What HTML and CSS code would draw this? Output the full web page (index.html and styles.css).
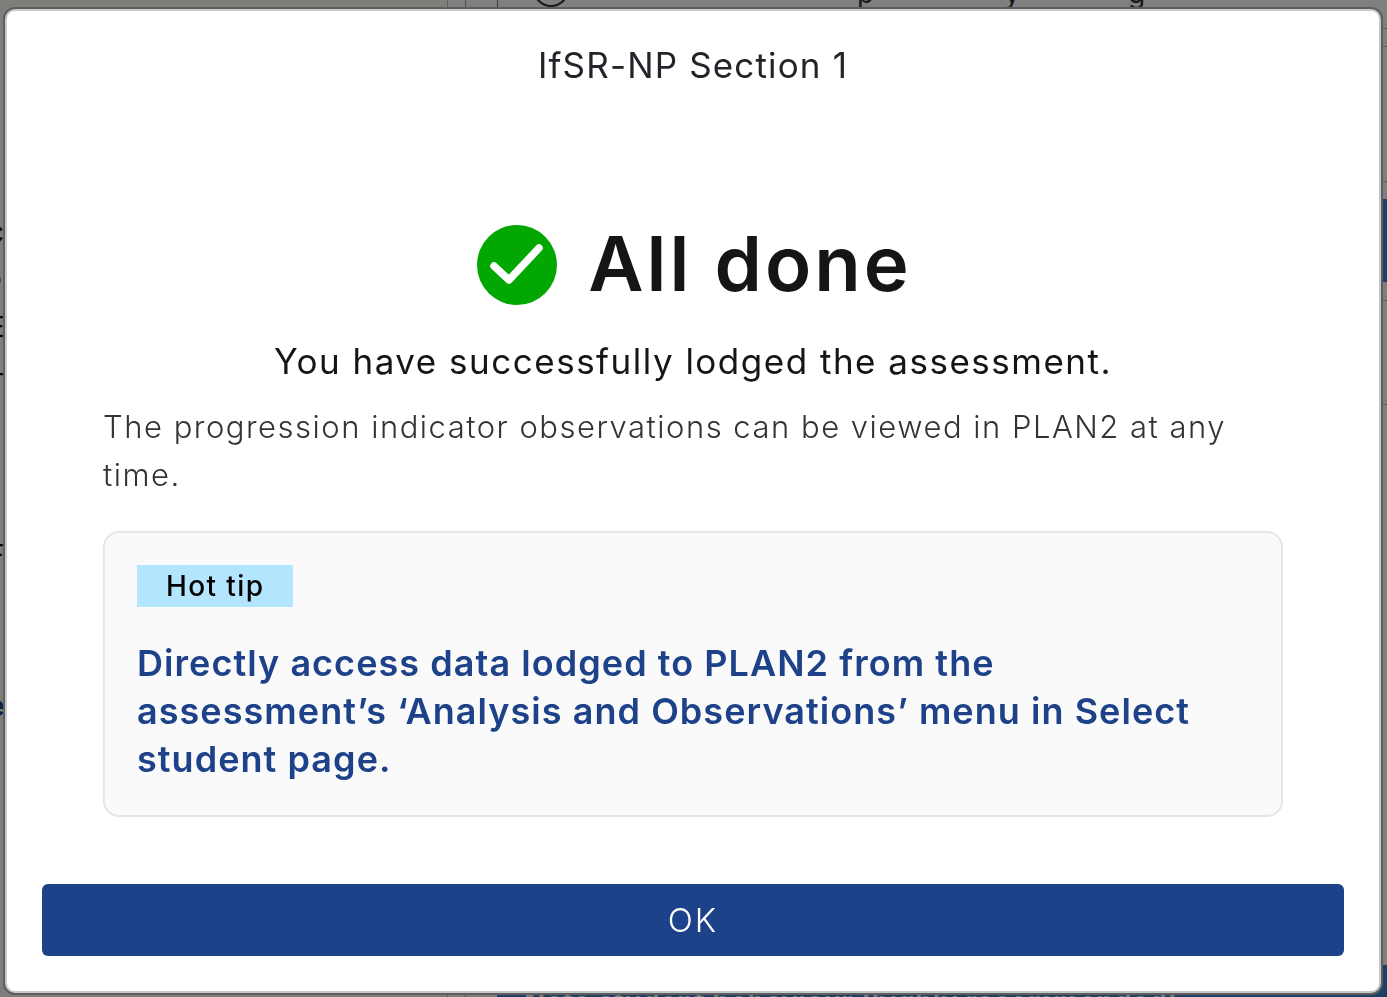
FILE: index.html
```html
<!DOCTYPE html>
<html lang="en">
<head>
  <meta charset="UTF-8">
  <title>IfSR-NP Section 1</title>
  <link rel="stylesheet" href="styles.css">
</head>
<body>
  <div class="page">
    <div class="page-left">
      <span class="edge-c">c</span>
      <span class="edge-o">o</span>
      <span class="edge-e">E</span>
      <span class="edge-h">H</span>
      <span class="edge-f">F</span>
      <span class="edge-blue">e</span>
      <span class="edge-dot">c</span>
    </div>
    <div class="page-rail"></div>
    <div class="page-main">
      <div class="top-line">
        <span class="top-circle"></span>
        <span class="top-p">p</span>
        <span class="top-y">y</span>
        <span class="top-g">g</span>
      </div>
      <div class="bottom-note">Note student behaviour (highly recommended)</div>
    </div>
    <div class="page-right">
      <div class="right-row row-a"></div>
      <div class="right-row row-b"></div>
      <div class="right-row row-c"><span class="edge-n">n</span></div>
      <div class="blue-bar"></div>
      <div class="right-row row-d"></div>
      <div class="right-row row-e"></div>
      <div class="right-foot"></div>
    </div>
  </div>
  <div class="backdrop"></div>

  <div class="modal">
    <h1 class="modal-title">IfSR-NP Section 1</h1>
    <div class="done">
      <svg class="done-icon" viewBox="0 0 80 80">
        <circle cx="40" cy="40" r="40" fill="#02a702"/>
        <path d="M17 41 L32 55 L62 23" fill="none" stroke="#fff" stroke-width="7.5" stroke-linecap="round" stroke-linejoin="round"/>
      </svg>
      <span class="done-text">All done</span>
    </div>
    <p class="lodged">You have successfully lodged the assessment.</p>
    <p class="info">The progression indicator observations can be viewed in PLAN2 at any time.</p>
    <div class="tip">
      <span class="tip-label">Hot tip</span>
      <p class="tip-text">Directly access data lodged to PLAN2 from the assessment’s ‘Analysis and Observations’ menu in Select student page.</p>
    </div>
    <button class="ok-btn">OK</button>
  </div>
</body>
</html>
```

FILE: styles.css
```css
* {
  box-sizing: border-box;
}
html, body {
  height: 100%;
}
body {
  margin: 0;
  overflow: hidden;
  background-color: #fff;
  color: #212529;
  font-family: Inter, "Open Sans", sans-serif;
}

/* page behind the dialog, only the edges show */
.page {
  display: flex;
  height: 997px;
  overflow: hidden;
}
.page-left {
  width: 448px;
  flex-shrink: 0;
  background-color: #fffff2;
  border-right: 1px solid #b8bcc8;
  display: flex;
  flex-direction: column;
  align-items: flex-start;
  overflow: hidden;
  font-size: 28px;
  line-height: 34px;
  color: #111;
}
.page-left span {
  margin-left: -12px;
}
.page-left .edge-c { margin-top: 215px; }
.page-left .edge-o { margin-top: 12px; margin-left: -15px; }
.page-left .edge-e { margin-top: 15px; }
.page-left .edge-h { margin-top: 14px; }
.page-left .edge-f { margin-top: 146px; }
.page-left .edge-blue { margin-top: 117px; color: #1d4289; font-weight: 600; }
.page-left .edge-dot { margin-top: 103px; margin-left: -15px; color: #1d4289; }
.page-rail {
  width: 50px;
  flex-shrink: 0;
  border-left: 17px solid #fff;
  border-right: 1px solid #777;
  box-shadow: inset 1px 0 0 #9aa8d0;
}
.page-main {
  flex: 1;
  min-width: 0;
  display: flex;
  flex-direction: column;
  justify-content: space-between;
}
.top-line {
  display: flex;
  align-items: flex-end;
  height: 6px;
  font-size: 28px;
  line-height: 28px;
  color: #333;
}
.top-circle {
  flex-shrink: 0;
  width: 36px;
  height: 36px;
  margin: 0 0 -1px 35px;
  border: 2px solid #333;
  border-radius: 50%;
}
.top-p, .top-y, .top-g {
  margin-bottom: -1px;
}
.top-p { margin-left: 288px; }
.top-y { margin-left: 130px; }
.top-g { margin-left: 108px; }
.bottom-note {
  height: 32px;
  padding: 21px 0 0 26px;
  overflow: hidden;
  white-space: nowrap;
  background-color: #3c7ccc;
  font-size: 28px;
  line-height: 32px;
  font-weight: 600;
  letter-spacing: 0.5px;
  color: #fff;
}
.page-right {
  width: 6px;
  flex-shrink: 0;
  display: flex;
  flex-direction: column;
  color: #222;
  font-size: 28px;
  line-height: 30px;
}
.right-row {
  border-bottom: 1px solid #bbb;
}
.row-a { height: 29px; }
.row-b { height: 18px; }
.row-c { height: 135px; }
.row-d { height: 19px; }
.row-e { height: 104px; }
.edge-n {
  display: block;
  margin: 30px 0 0 -13px;
}
.blue-bar {
  height: 83px;
  margin-top: 17px;
  background-color: #3c7ccc;
}
.right-foot {
  height: 32px;
  margin-top: auto;
  background-color: #3c7ccc;
}
.backdrop {
  position: fixed;
  inset: 0;
  background-color: rgba(0, 0, 0, 0.5);
}

/* dialog */
.modal {
  position: fixed;
  left: 5px;
  top: 9px;
  width: 1376px;
  height: 984px;
  display: flex;
  flex-direction: column;
  align-items: center;
  background-color: #fff;
  border: 2px solid #c9c9c9;
  border-radius: 10px;
  box-shadow: 0 0 0 2px #5e5e5e;
  padding: 0 35px;
}
.modal-title {
  margin: 30px 0 0;
  font-size: 35px;
  line-height: 48px;
  font-weight: 400;
  letter-spacing: 1.15px;
  color: #212529;
}
.done {
  margin-top: 136px;
  display: flex;
  align-items: center;
  gap: 31px;
}
.done-icon {
  width: 80px;
  height: 80px;
}
.done-text {
  margin-right: -3px;
  margin-bottom: 4px;
  font-size: 76px;
  line-height: 76px;
  font-weight: 600;
  color: #151515;
  letter-spacing: 3px;
}
.lodged {
  margin: 32px 0 0;
  font-size: 35px;
  line-height: 48px;
  font-weight: 400;
  letter-spacing: 1.5px;
  color: #151515;
}
.info {
  width: 1180px;
  margin: 18px 0 0;
  font-size: 31px;
  line-height: 48px;
  font-weight: 300;
  letter-spacing: 1.5px;
  color: #333;
}
.tip {
  width: 1180px;
  height: 286px;
  margin-top: 32px;
  padding: 32px;
  background-color: #fafafa;
  border: 2px solid #e6e6e6;
  border-radius: 16px;
}
.tip-label {
  display: inline-block;
  width: 156px;
  height: 42px;
  padding-left: 29px;
  font-size: 28px;
  line-height: 42px;
  font-weight: 500;
  letter-spacing: 1.4px;
  color: #000;
  background-color: #b3e5ff;
  vertical-align: top;
}
.tip-text {
  margin: 32px 0 0;
  font-size: 36px;
  line-height: 48px;
  font-weight: 600;
  letter-spacing: 1.05px;
  color: #1d4289;
}
.ok-btn {
  width: 1302px;
  height: 72px;
  margin-top: 67px;
  flex-shrink: 0;
  border: none;
  border-radius: 6px;
  background-color: #1d4289;
  color: #fff;
  font-family: inherit;
  font-size: 33px;
  font-weight: 300;
  letter-spacing: 2px;
  cursor: pointer;
}
```
